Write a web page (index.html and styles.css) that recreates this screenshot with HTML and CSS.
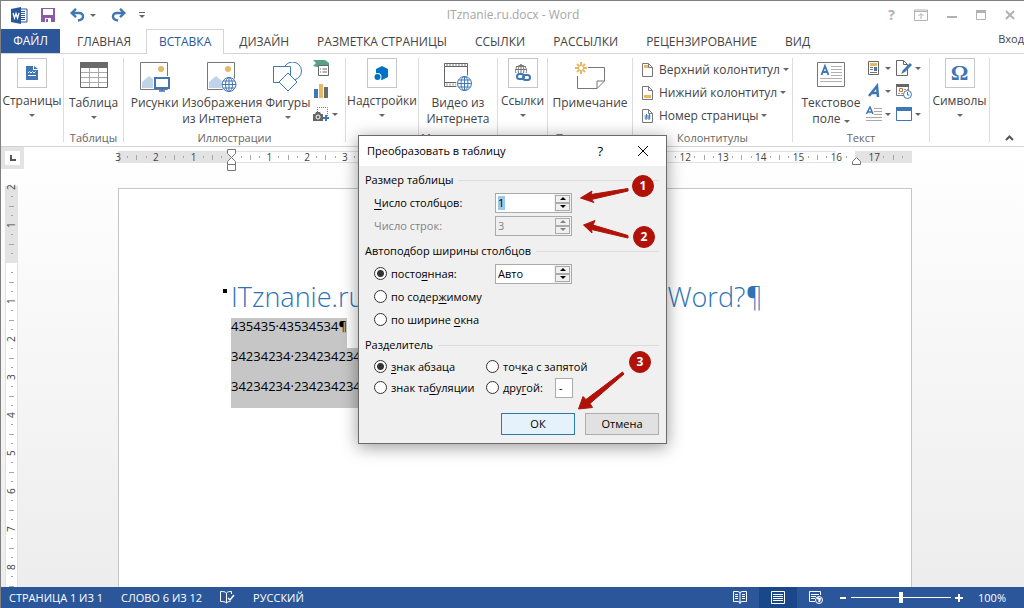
FILE: index.html
```html
<!DOCTYPE html>
<html lang="ru">
<head>
    <meta charset="UTF-8">
    <meta name="viewport" content="width=device-width, initial-scale=1.0">
    <title>ITznanie.ru.docx - Word</title>
    <link rel="stylesheet" href="styles.css">
</head>
<body>
    <header class="titlebar">
        <div class="quick-access">
            <svg class="logo" width="17" height="17" viewBox="0 0 17 17">
                <path d="M9 2h7v13H9z" fill="#fff" stroke="#2b579a"/>
                <path d="M10 4.500h4M10 6.500h4M10 8.500h4M10 10.500h4M10 12.500h4" stroke="#2b579a"/>
                <path d="M0 2l10-2v17L0 15z" fill="#2b579a"/>
                <path d="M2 6l1.500 5L5 6.500 6.500 11 8 6" fill="none" stroke="#fff" stroke-width="1.300"/>
            </svg>
            <button class="tool" aria-label="Сохранить">
                <svg width="14" height="14" viewBox="0 0 14 14">
                    <path d="M0 0h14v14H0z" fill="#8a5ca8"/>
                    <path d="M2 1h10v6H2zM4 10h6v4H4z" fill="#fff"/>
                    <path d="M5 11h2v3H5z" fill="#8a5ca8"/>
                </svg>
            </button>
            <button class="tool undo" aria-label="Отменить">
                <svg width="15" height="14" viewBox="0 0 15 14" fill="none" stroke="#3f76b4" stroke-width="2.400">
                    <path d="M2 5h7c2.500 0 4 1.500 4 3.500S11.500 12 8 12.500"/>
                    <path d="M6 .8L1.700 5 6 9.200"/>
                </svg>
                <i class="arrow"></i>
            </button>
            <button class="tool" aria-label="Повторить">
                <svg width="15" height="14" viewBox="0 0 15 14" fill="none" stroke="#3f76b4" stroke-width="2.400">
                    <path d="M13 5H6C3.500 5 2 6.500 2 8.500S3.500 12 7 12.500"/>
                    <path d="M9 .8L13.300 5 9 9.200"/>
                </svg>
            </button>
            <button class="tool" aria-label="Настройка панели">
                <svg width="6" height="6" viewBox="0 0 6 6"><path d="M0 .5h6" stroke="#666"/><path d="M0 3h6L3 6z" fill="#666"/></svg>
            </button>
        </div>
        <div class="doc-name">ITznanie.ru.docx - Word</div>
        <div class="window-buttons">
            <button class="tool help" aria-label="Справка">?</button>
            <button class="tool" aria-label="Лента">
                <svg width="14" height="12" viewBox="0 0 14 12"><path d="M.5 1h13v10.500H.5zM.5 2.500h13M7 10V5M4.500 7L7 4.500 9.500 7" fill="none" stroke="#b1b1b1"/></svg>
            </button>
            <button class="tool" aria-label="Свернуть">
                <svg width="10" height="10" viewBox="0 0 10 10"><path d="M0 7h10" stroke="#b1b1b1" stroke-width="2"/></svg>
            </button>
            <button class="tool" aria-label="Развернуть">
                <svg width="10" height="10" viewBox="0 0 10 10"><path d="M.5.5h9v9h-9z" fill="none" stroke="#b1b1b1"/><path d="M0 0h10v3H0z" fill="#b1b1b1"/></svg>
            </button>
            <button class="tool" aria-label="Закрыть">
                <svg width="10" height="10" viewBox="0 0 10 10"><path d="M1 1l8 8M9 1L1 9" stroke="#b1b1b1" stroke-width="2"/></svg>
            </button>
        </div>
    </header>

    <nav class="tabs">
        <button class="tab file">ФАЙЛ</button>
        <button class="tab">ГЛАВНАЯ</button>
        <button class="tab active">ВСТАВКА</button>
        <button class="tab">ДИЗАЙН</button>
        <button class="tab">РАЗМЕТКА СТРАНИЦЫ</button>
        <button class="tab">ССЫЛКИ</button>
        <button class="tab">РАССЫЛКИ</button>
        <button class="tab">РЕЦЕНЗИРОВАНИЕ</button>
        <button class="tab">ВИД</button>
        <a class="login" href="#">Вход</a>
    </nav>

    <section class="ribbon">
        <div class="group pages">
            <div class="items">
                <button class="big folded">
                    <span class="icon boxed">
                        <svg width="12" height="14" viewBox="0 0 12 14"><path d="M0 0h7v4h5v10H0z" fill="#3f76b4"/><path d="M8 0l4 3H8z" fill="#3f76b4"/><path d="M2 7l1.500-1.500L5 7l1.500-1.500L8 7l1.500-1.500M2 9.500h8" stroke="#fff" fill="none"/></svg>
                    </span>
                    <span>Страницы</span>
                    <i class="arrow"></i>
                </button>
            </div>
        </div>
        <div class="group tables">
            <div class="items">
                <button class="big">
                    <span class="icon">
                        <svg width="28" height="26" viewBox="0 0 28 26">
                            <path d="M.5.5h27v25H.5z" fill="#fff" stroke="#6a6a6a"/>
                            <path d="M1 10.500h26M1 15.500h26M1 20.500h26M9.500 5v20M18.500 5v20" stroke="#a8a8a8"/>
                            <path d="M0 0h28v6H0z" fill="#6a6a6a"/>
                        </svg>
                    </span>
                    <span>Таблица</span>
                    <i class="arrow"></i>
                </button>
            </div>
            <div class="caption">Таблицы</div>
        </div>
        <div class="group pictures">
            <div class="items">
                <button class="big">
                    <span class="icon">
                        <svg width="30" height="30" viewBox="0 0 30 30">
                            <path d="M.5.5h27v27H.5z" fill="#fff" stroke="#777"/>
                            <path d="M2 26v-6l7-6 6 5v7z" fill="#c0d3e8"/><circle cx="21" cy="7" r="3" fill="#e8b763"/>
                            <path d="M13 14h17v13H13z" fill="#fff"/><path d="M15 16h14v10H15z" fill="#fff" stroke="#3f76b4" stroke-width="2"/>
                            <path d="M22 26v3M19 29h6" stroke="#3f76b4" stroke-width="1.500"/>
                        </svg>
                    </span>
                    <span>Рисунки</span>
                </button>
                <button class="big online">
                    <span class="icon">
                        <svg width="30" height="30" viewBox="0 0 30 30">
                            <path d="M.5.5h27v27H.5z" fill="#fff" stroke="#777"/>
                            <path d="M2 26v-6l7-6 6 5v7z" fill="#c0d3e8"/><circle cx="21" cy="7" r="3" fill="#e8b763"/>
                            <circle cx="22" cy="22.500" r="8" fill="#fff"/>
                            <g fill="none" stroke="#3f76b4"><circle cx="22" cy="22.500" r="7"/><ellipse cx="22" cy="22.500" rx="3.500" ry="7"/><path d="M15 22.500h14M22 15.500v14M16 19h12M16 26h12"/></g>
                        </svg>
                    </span>
                    <span>Изображения<br>из Интернета</span>
                </button>
                <button class="big shapes">
                    <span class="icon">
                        <svg width="30" height="30" viewBox="0 0 30 30" fill="#fff" stroke="#3f76b4">
                            <circle cx="19.500" cy="9" r="9"/><path d="M.5 4.500h17v16H.5z"/><path d="M15 11l9 9-9 9-9-9z"/>
                        </svg>
                    </span>
                    <span>Фигуры</span>
                    <i class="arrow"></i>
                </button>
                <div class="small-column">
                    <button class="small" aria-label="SmartArt">
                        <svg width="16" height="16" viewBox="0 0 16 16"><path d="M0 0h12l4 3v4H4L0 6l3-3z" fill="#58a181"/><path d="M5.500 5.500h10v10h-10z" fill="#fff" stroke="#666"/><path d="M7 9h1M9.500 9H14M7 12h1M9.500 12H14" stroke="#666"/></svg>
                    </button>
                    <button class="small" aria-label="Диаграмма">
                        <svg width="16" height="16" viewBox="0 0 16 16"><path d="M1 6h4v9H1z" fill="#3f76b4"/><path d="M6 1h4v14H6z" fill="#e8b763"/><path d="M11 4h4v11h-4z" fill="#6a6a6a"/></svg>
                    </button>
                    <button class="small" aria-label="Снимок">
                        <svg width="16" height="16" viewBox="0 0 16 16"><path d="M4.500 6V1.500h10V10" fill="none" stroke="#777" stroke-dasharray="1 1"/><path d="M0 8h2l1-2h4l1 2h2v7H0z" fill="#666"/><circle cx="5" cy="11" r="2" fill="#666" stroke="#fff"/><path d="M13 9v6M10 12h6" stroke="#3f76b4" stroke-width="2"/></svg>
                        <i class="arrow"></i>
                    </button>
                </div>
            </div>
            <div class="caption">Иллюстрации</div>
        </div>
        <div class="group addins">
            <div class="items">
                <button class="big folded">
                    <span class="icon boxed">
                        <svg width="15" height="15" viewBox="0 0 15 15"><path d="M2 3l6-3 6 3v8l-6 3-6-3z" fill="#0072c6"/><circle cx="3.500" cy="11" r="4" fill="#fff"/><circle cx="3.500" cy="11" r="3" fill="#0072c6"/></svg>
                    </span>
                    <span>Надстройки</span>
                    <i class="arrow"></i>
                </button>
            </div>
        </div>
        <div class="group media">
            <div class="items">
                <button class="big">
                    <span class="icon">
                        <svg width="28" height="29" viewBox="0 0 28 29">
                            <path d="M.5 1.500h23v23H.5z" fill="#fff" stroke="#666"/>
                            <path d="M1 4.500h22M1 20.500h22" stroke="#666"/>
                            <path d="M2.500 3h21M2.500 22.500h21" stroke="#777" stroke-width="2" stroke-dasharray="1 2"/>
                            <circle cx="20.500" cy="21.500" r="8.500" fill="#fff"/>
                            <g fill="none" stroke="#3f76b4"><circle cx="20.500" cy="21.500" r="7"/><ellipse cx="20.500" cy="21.500" rx="3.500" ry="7"/><path d="M13.500 21.500h14M20.500 14.500v14M14.500 18h12M14.500 25h12"/></g>
                        </svg>
                    </span>
                    <span>Видео из<br>Интернета</span>
                </button>
            </div>
            <div class="caption">Мультимедиа</div>
        </div>
        <div class="group links">
            <div class="items">
                <button class="big folded">
                    <span class="icon boxed">
                        <svg width="16" height="18" viewBox="0 0 16 18" fill="none"><g stroke="#777"><path d="M1 9a5.500 5.500 0 1 1 10 0M.5 5.500h11M1 2.500h10M6 0v9M3.500 9c-1-4 0-7 2.500-8.500C8.500 2 9.500 5 8.500 9"/></g><g stroke="#3f76b4" stroke-width="2"><rect x="2" y="10" width="7" height="5" rx="2.500"/><rect x="8" y="11" width="7" height="5" rx="2.500"/></g></svg>
                    </span>
                    <span>Ссылки</span>
                    <i class="arrow"></i>
                </button>
            </div>
        </div>
        <div class="group comments">
            <div class="items">
                <button class="big">
                    <span class="icon">
                        <svg class="note" width="30" height="28" viewBox="0 0 30 28" fill="none"><path d="M13 5.500h16.500V19L22 26.500H2.500V14M22 26.500V19h7" stroke="#777"/><path d="M6 0v12M0 6h12M2 2l8 8M10 2l-8 8" stroke="#e8b763" stroke-width="2"/><circle cx="6" cy="6" r="2" fill="#fff"/></svg>
                    </span>
                    <span>Примечание</span>
                </button>
            </div>
            <div class="caption">Примечания</div>
        </div>
        <div class="group header-footer">
            <div class="list">
                <button class="row">
                    <svg width="11" height="14" viewBox="0 0 11 14"><path d="M.5.5h6l4 4v9H.5zM6.500.5v4h4" fill="#fff" stroke="#777"/><path d="M2 2h4v3H2z" fill="#e8b763"/></svg>
                    <span>Верхний колонтитул</span><i class="arrow"></i>
                </button>
                <button class="row">
                    <svg width="11" height="14" viewBox="0 0 11 14"><path d="M.5.5h6l4 4v9H.5zM6.500.5v4h4" fill="#fff" stroke="#777"/><path d="M2 9h7v3H2z" fill="#e8b763"/></svg>
                    <span>Нижний колонтитул</span><i class="arrow"></i>
                </button>
                <button class="row">
                    <svg width="11" height="14" viewBox="0 0 11 14"><path d="M.5.5h6l4 4v9H.5zM6.500.5v4h4" fill="#fff" stroke="#777"/><path d="M4.500 5L4 11M7.500 5L7 11M2.500 7h6M2.500 9h6" stroke="#3f76b4"/></svg>
                    <span>Номер страницы</span><i class="arrow"></i>
                </button>
            </div>
            <div class="caption">Колонтитулы</div>
        </div>
        <div class="group text">
            <div class="items">
                <button class="big textbox">
                    <span class="icon">
                        <svg width="28" height="25" viewBox="0 0 28 25"><path d="M.5.5h27v24H.5z" fill="#fff" stroke="#777"/><path d="M14 4.500h11M14 7.500h11M14 10.500h11M14 13.500h11M3 16.500h22M3 19.500h22" stroke="#b1b1b1"/><path d="M4.500 13L8 4l3.500 9M5.500 10h5" fill="none" stroke="#3f76b4" stroke-width="1.800"/></svg>
                    </span>
                    <span>Текстовое<br>поле <i class="arrow"></i></span>
                </button>
                <div class="small-column">
                    <button class="small" aria-label="Экспресс-блоки">
                        <svg width="16" height="16" viewBox="0 0 16 16"><path d="M2.500 1.500h10v13h-10z" fill="#fff" stroke="#666"/><path d="M4 3h7v3H4z" fill="#e8b763"/><path d="M4 7.500h3M4 9.500h3M4 12.500h7" stroke="#777"/><path d="M8 7h3v4H8z" fill="#3f76b4"/></svg>
                        <i class="arrow"></i>
                    </button>
                    <button class="small" aria-label="WordArt">
                        <svg width="16" height="16" viewBox="0 0 16 16"><path d="M3 13l8-10 1 11M6 10h5" fill="none" stroke="#3f76b4" stroke-width="2.500"/></svg>
                        <i class="arrow"></i>
                    </button>
                    <button class="small" aria-label="Буквица">
                        <svg width="16" height="16" viewBox="0 0 16 16"><path d="M8 2.500h8M8 5.500h8M8 8.500h8M0 11.500h16M0 14.500h16" stroke="#a8a8a8"/><path d="M.5 8L4 1l3 7M2 6h4" fill="none" stroke="#3f76b4" stroke-width="1.500"/></svg>
                        <i class="arrow"></i>
                    </button>
                </div>
                <div class="small-column">
                    <button class="small" aria-label="Строка подписи">
                        <svg width="16" height="16" viewBox="0 0 16 16"><path d="M.5.5h7l4 4v11H.5zM7.500.5v4h4" fill="#fff" stroke="#666"/><path d="M5 14l2-4 7-7 2 2-7 7z" fill="#3f76b4"/></svg>
                        <i class="arrow"></i>
                    </button>
                    <button class="small" aria-label="Дата и время">
                        <svg width="16" height="16" viewBox="0 0 16 16"><path d="M.5 1.500h12v11H.5z" fill="#fff" stroke="#777"/><path d="M0 1h13v3H0z" fill="#666"/><path d="M3.500 5.500h3v3h-3z" fill="none" stroke="#d8702a"/><path d="M8 6.500h4M2 10.500h5" stroke="#999" stroke-dasharray="2 1"/><circle cx="11.500" cy="11.500" r="4" fill="#fff" stroke="#3f76b4"/><path d="M11.500 9v3h2" fill="none" stroke="#3f76b4"/></svg>
                    </button>
                    <button class="small" aria-label="Объект">
                        <svg width="16" height="14" viewBox="0 0 16 14"><path d="M.5.5h15v13H.5z" fill="#fff" stroke="#3f76b4"/><path d="M0 0h16v4H0z" fill="#3f76b4"/></svg>
                        <i class="arrow"></i>
                    </button>
                </div>
            </div>
            <div class="caption">Текст</div>
        </div>
        <div class="group symbols">
            <div class="items">
                <button class="big folded">
                    <span class="icon boxed omega">Ω</span>
                    <span>Символы</span>
                    <i class="arrow"></i>
                </button>
            </div>
        </div>
        <button class="collapse" aria-label="Свернуть ленту">
            <svg width="9" height="6" viewBox="0 0 9 6"><path d="M1 5l3.500-3.500L8 5" fill="none" stroke="#555" stroke-width="2"/></svg>
        </button>
    </section>

    <main class="workspace">
        <div class="left-edge">
            <button class="tab-stop" aria-label="Табуляция">
                <svg width="6" height="6" viewBox="0 0 6 6"><path d="M1 0v5h5" fill="none" stroke="#555" stroke-width="2"/></svg>
            </button>
            <div class="ruler-v">
                <span class="margin"><b>2</b></span><span class="margin"><b>1</b></span><span></span><span><b>1</b></span><span><b>2</b></span><span><b>3</b></span><span><b>4</b></span><span><b>5</b></span><span><b>6</b></span><span><b>7</b></span><span><b>8</b></span>
            </div>
        </div>
        <div class="canvas">
            <div class="ruler-h">
                <span class="margin"><b>3</b></span><span class="margin"><b>2</b></span><span class="margin"><b>1</b></span>
                <span>
                    <svg class="indent" width="9" height="22" viewBox="0 0 9 22" fill="#fff" stroke="#777"><path d="M.5.5h8v4l-4 4-4-4zM.5 15.500v-3l4-4 4 4v3zM.5 15.500h8v6h-8z"/></svg>
                </span>
                <span><b>1</b></span><span><b>2</b></span><span><b>3</b></span><span></span><span></span><span></span><span></span><span></span><span></span><span></span><span></span><span><b>12</b></span><span><b>13</b></span><span><b>14</b></span><span><b>15</b></span>
                <span class="half"><b>16</b>
                    <svg class="indent-right" width="9" height="8" viewBox="0 0 9 8"><path d="M.5 7.500v-3l4-4 4 4v3z" fill="#fff" stroke="#777"/></svg>
                </span>
                <span class="margin"><b>17</b></span>
            </div>
            <article class="page">
                <h1><span>ITznanie.ru</span><span>Word?¶</span></h1>
                <p><mark>435435·43534534¶</mark></p>
                <p><mark>34234234·234234234¶</mark></p>
                <p><mark>34234234·234234234¶</mark></p>
            </article>
        </div>
    </main>

    <footer class="status">
        <span>СТРАНИЦА 1 ИЗ 1</span>
        <span>СЛОВО 6 ИЗ 12</span>
        <svg width="15" height="13" viewBox="0 0 15 13" fill="none" stroke="#fff"><path d="M6.500 12V2C5 .5 3 .5.5.5v10c2.500 0 4.500 0 6 1.500 1-1 2-1.500 4-1.500M6.500 2C8 .5 9 .5 11.500.5V3"/><path d="M8 7l2 2 4-5" stroke-width="1.500"/></svg>
        <span>РУССКИЙ</span>
        <div class="views">
            <button class="view" aria-label="Чтение"><svg width="14" height="13" viewBox="0 0 14 13" fill="none" stroke="#fff"><path d="M.5.5H5l2 1 2-1h4.500v10H9l-2 1-2-1H.5zM7 1v12M2 3.500h3M2 5.500h3M2 7.500h3M9 3.500h3M9 5.500h3M9 7.500h3"/></svg></button>
            <button class="view current" aria-label="Разметка"><svg width="14" height="13" viewBox="0 0 14 13" fill="none" stroke="#fff"><path d="M.5.5h13v12H.5zM2 3.500h10M2 5.500h10M2 7.500h10M2 9.500h10"/></svg></button>
            <button class="view" aria-label="Веб-документ"><svg width="14" height="13" viewBox="0 0 14 13" fill="none" stroke="#fff"><path d="M6 10.500H.5V.5h11V4M2 3.500h8M2 5.500h5M2 7.500h4"/><circle cx="10" cy="9" r="3.500"/><path d="M8 7l3 1-1 3" stroke-width="2"/></svg></button>
        </div>
        <div class="zoom">
            <button class="step" aria-label="Уменьшить"><svg width="8" height="8" viewBox="0 0 8 8"><path d="M1 4h6" stroke="#fff" stroke-width="2"/></svg></button>
            <input type="range" min="0" max="100" value="50" aria-label="Масштаб">
            <button class="step" aria-label="Увеличить"><svg width="8" height="8" viewBox="0 0 8 8"><path d="M0 4h8M4 0v8" stroke="#fff" stroke-width="2"/></svg></button>
        </div>
        <span class="percent">100%</span>
    </footer>

    <form class="dialog" role="dialog" aria-labelledby="dialogTitle">
        <div class="dialog-head">
            <span id="dialogTitle">Преобразовать в таблицу</span>
            <button type="button" class="tool question" aria-label="Справка">?</button>
            <button type="button" class="tool" aria-label="Закрыть"><svg width="12" height="12" viewBox="0 0 12 12"><path d="M1 1l10 10M11 1L1 11" stroke="#000"/></svg></button>
        </div>
        <div class="dialog-body">
            <div class="legend">Размер таблицы</div>
            <div class="field">
                <label for="cols"><u>Ч</u>исло столбцов:</label>
                <div class="spin">
                    <div class="value"><input type="text" id="cols" class="selected" value="1" size="1"></div>
                    <div class="steps"><button type="button" class="up" aria-label="Больше"></button><button type="button" class="down" aria-label="Меньше"></button></div>
                </div>
            </div>
            <div class="field disabled">
                <label for="rows">Число строк:</label>
                <div class="spin">
                    <div class="value"><input type="text" id="rows" value="3" disabled></div>
                    <div class="steps"><button type="button" class="up" disabled aria-label="Больше"></button><button type="button" class="down" disabled aria-label="Меньше"></button></div>
                </div>
            </div>
            <div class="legend second">Автоподбор ширины столбцов</div>
            <div class="field">
                <label><input type="radio" name="fit" checked>посто<u>я</u>нная:</label>
                <div class="spin">
                    <div class="value"><input type="text" value="Авто" aria-label="Ширина столбца"></div>
                    <div class="steps"><button type="button" class="up" aria-label="Больше"></button><button type="button" class="down" aria-label="Меньше"></button></div>
                </div>
            </div>
            <div class="field"><label><input type="radio" name="fit">по содер<u>ж</u>имому</label></div>
            <div class="field"><label><input type="radio" name="fit">по ширине <u>о</u>кна</label></div>
            <div class="legend second">Разделитель</div>
            <div class="separators">
                <label><input type="radio" name="sep" checked><span><u>з</u>нак абзаца</span></label>
                <label><input type="radio" name="sep"><span>точ<u>к</u>а с запятой</span></label>
                <label><input type="radio" name="sep"><span>знак та<u>б</u>уляции</span></label>
                <div class="other">
                    <label><input type="radio" name="sep"><span>дру<u>г</u>ой:</span></label>
                    <input type="text" class="char" value="-" aria-label="Другой разделитель">
                </div>
            </div>
            <div class="actions">
                <button type="submit" class="ok">ОК</button>
                <button type="button">Отмена</button>
            </div>
        </div>
        <svg class="hints" width="307" height="307" viewBox="0 0 307 307">
            <g fill="#b01208" stroke="#b01208" stroke-linejoin="round">
                <path d="M269 52.500L232 58.500 233 55 221.500 62 235 66.500 232.500 63.500 269 55z"/>
                <path d="M269 99.500L234 89 236 84.500 224.500 89 233 97 232.500 93.500 269 102z"/>
                <path d="M263.500 236L227 263.500 224 260.500 219.500 273 233.500 271.500 231 267.500 265 238z"/>
                <circle cx="284" cy="50" r="10.500"/><circle cx="285" cy="101" r="10.500"/><circle cx="281" cy="226" r="10.500"/>
            </g>
            <text x="284" y="54">1</text>
            <text x="285" y="105">2</text>
            <text x="281" y="230">3</text>
        </svg>
    </form>
</body>
</html>
```
FILE: styles.css
```css
* {
    box-sizing: border-box;
}

body {
    display: flex;
    flex-direction: column;
    height: 100vh;
    margin: 0;
    border-top: 1px solid #808080;
    border-left: 1px solid #808080;
    background: #fff;
    color: #444;
    font-family: "Open Sans", "Noto Sans", sans-serif;
    font-size: 12px;
    line-height: 16px;
    overflow: hidden;
}

button, input {
    margin: 0;
    padding: 0;
    border: none;
    background: none;
    color: inherit;
    font: inherit;
}

svg {
    display: block;
    flex: none;
}

.arrow {
    display: inline-block;
    flex: none;
    width: 0;
    border: 3px solid transparent;
    border-top-color: #666;
    border-bottom: none;
}

/* title bar */
.titlebar {
    display: grid;
    grid-template-columns: 1fr auto 1fr;
    align-items: center;
    height: 28px;
    padding: 0 9px 0 10px;
}

.quick-access, .window-buttons {
    display: flex;
    align-items: center;
    gap: 13px;
}

.tool {
    display: flex;
    align-items: center;
    gap: 5px;
}

.undo {
    margin: 0 2px;
}

.doc-name {
    color: #a6a6a6;
}

.window-buttons {
    justify-content: flex-end;
    gap: 19px;
}

.help {
    color: #b1b1b1;
    font-size: 14px;
    font-weight: 700;
}

/* tabs */
.tabs {
    display: flex;
    height: 25px;
    border-bottom: 1px solid #d4d4d4;
}

.tab {
    height: 24px;
    padding: 1px 14px 0;
    white-space: nowrap;
}

.file {
    width: 59px;
    padding: 0;
    margin-right: 3px;
    background: #2b579a;
    color: #fff;
}

.active {
    height: 25px;
    margin: 0 1px;
    padding: 0 12px;
    border: 1px solid #d4d4d4;
    border-bottom: none;
    background: #fff;
    color: #2b579a;
}

.login {
    margin-left: auto;
    padding-top: 2px;
    color: #444;
    font-size: 11px;
    text-decoration: none;
}

/* ribbon */
.ribbon {
    display: flex;
    flex: none;
    height: 93px;
    padding: 4px 0;
    border-bottom: 1px solid #d4d4d4;
}

.group {
    display: flex;
    flex: none;
    flex-direction: column;
    justify-content: space-between;
    border-right: 1px solid #dcdcdc;
}

.pages { width: 63px; }
.tables { width: 60px; }
.pictures { width: 222px; }
.addins { width: 73px; }
.media { width: 79px; }
.links { width: 50px; }
.comments { width: 85px; }
.header-footer { width: 160px; }
.text { width: 137px; }
.symbols { width: 60px; }

.items {
    display: flex;
    justify-content: center;
}

.caption {
    height: 10px;
    color: #666;
    font-size: 11px;
    line-height: 12px;
    text-align: center;
}

.big {
    display: flex;
    flex-direction: column;
    align-items: center;
    white-space: nowrap;
}

.icon {
    display: flex;
    align-items: flex-start;
    height: 33px;
    margin-bottom: 4px;
    padding-top: 4px;
}

.boxed {
    align-items: center;
    justify-content: center;
    width: 30px;
    height: 30px;
    margin-bottom: 5px;
    padding: 0;
    border: 1px solid #c6c6c6;
}

.big > .arrow {
    margin-top: 5px;
}

.omega {
    color: #3f76b4;
    font-family: "Liberation Serif", serif;
    font-size: 22px;
    font-weight: 700;
}

.pictures .items {
    gap: 3px;
}

.text .items {
    gap: 5px;
}

.small-column {
    display: flex;
    flex-direction: column;
    gap: 7px;
    padding-top: 2px;
}

.small {
    display: flex;
    align-items: center;
    gap: 3px;
    height: 16px;
}

.list {
    padding-left: 9px;
}

.row {
    display: flex;
    align-items: center;
    gap: 3px;
    height: 23px;
    white-space: nowrap;
}

.row svg {
    margin-right: 3px;
}

.collapse {
    align-self: flex-end;
    padding: 0 15px 1px;
}

/* document area */
.workspace {
    display: flex;
    flex: 1;
    min-height: 0;
    padding-right: 18px;
    background: linear-gradient(#fff, #ededed);
    overflow: hidden;
}

.left-edge {
    flex: none;
    width: 23px;
}

.tab-stop {
    display: grid;
    place-items: center;
    width: 23px;
    height: 22px;
    border: 4px solid #e3e3e3;
    background: #fff;
}

.ruler-v {
    width: 13px;
    margin: 17px 0 0 4px;
    border: 1px solid #e1e1e1;
    border-bottom: none;
    background: #fff;
    font-size: 10px;
    line-height: 11px;
}

.ruler-v span {
    display: flex;
    flex-direction: column;
    width: 11px;
    height: 38px;
    background:
        linear-gradient(#a6a6a6, #a6a6a6) center 9px / 2px 1px no-repeat,
        linear-gradient(#a6a6a6, #a6a6a6) center 19px / 5px 1px no-repeat,
        linear-gradient(#a6a6a6, #a6a6a6) center 28px / 2px 1px no-repeat;
}

.ruler-v b {
    height: 6px;
    margin-top: -3px;
    font-weight: 400;
    writing-mode: vertical-rl;
    transform: rotate(180deg);
}

.ruler-v .margin {
    background-color: #e3e3e3;
}

.canvas {
    display: flex;
    flex: 1;
    flex-direction: column;
    align-items: center;
    min-width: 0;
}

.ruler-h {
    display: grid;
    flex: none;
    grid-template-columns: repeat(21, 1fr);
    width: 794px;
    height: 12px;
    margin-top: 4px;
    font-size: 10px;
    line-height: 12px;
}

.ruler-h span {
    position: relative;
    display: flex;
    background:
        linear-gradient(#a6a6a6, #a6a6a6) 25% center / 1px 2px no-repeat,
        linear-gradient(#a6a6a6, #a6a6a6) 50% center / 1px 5px no-repeat,
        linear-gradient(#a6a6a6, #a6a6a6) 75% center / 1px 2px no-repeat,
        linear-gradient(#e1e1e1, #e1e1e1) top / 100% 1px no-repeat,
        linear-gradient(#e1e1e1, #e1e1e1) bottom / 100% 1px no-repeat #fff;
}

.ruler-h .margin {
    background-color: #e3e3e3;
}

.ruler-h .half {
    background:
        linear-gradient(#a6a6a6, #a6a6a6) 25% center / 1px 2px no-repeat,
        linear-gradient(90deg, #fff 50%, #e3e3e3 50%);
}

.ruler-h b {
    z-index: 1;
    display: flex;
    justify-content: center;
    width: 0;
    font-weight: 400;
}

.indent {
    position: absolute;
    top: -2px;
    left: -4px;
}

.indent-right {
    position: absolute;
    top: 6px;
    left: 16px;
}

.page {
    flex: 1;
    width: 794px;
    margin-top: 25px;
    padding: 91px 148px 0 112px;
    border: 1px solid #c6c6c6;
    border-bottom: none;
    background: #fff;
    color: #000;
    font-size: 13px;
}

h1 {
    position: relative;
    display: flex;
    justify-content: space-between;
    margin: 0 0 4px;
    color: #2e74b5;
    font-size: 27px;
    font-weight: 300;
    line-height: 34px;
}

h1::before {
    content: "";
    position: absolute;
    top: 9px;
    left: -8px;
    width: 4px;
    height: 4px;
    background: #000;
}

.page p {
    height: 30px;
    margin: 0;
}

mark {
    display: inline-block;
    height: 30px;
    background: #c6c6c6;
    line-height: 16px;
}

/* status bar */
.status {
    display: flex;
    flex: none;
    align-items: center;
    gap: 18px;
    height: 21px;
    padding: 0 18px 0 8px;
    background: #2b579a;
    color: #fff;
    font-size: 11px;
    white-space: nowrap;
}

.views {
    display: flex;
    height: 21px;
    margin-left: auto;
}

.view {
    display: grid;
    place-items: center;
    width: 38px;
}

.current {
    background: #19478a;
}

.zoom {
    display: flex;
    align-items: center;
    gap: 4px;
    margin-left: -14px;
}

input[type="range"] {
    appearance: none;
    width: 100px;
    height: 12px;
    background: linear-gradient(#fff, #fff) center / 100% 1px no-repeat;
}

input[type="range"]::-webkit-slider-thumb {
    appearance: none;
    width: 4px;
    height: 11px;
    background: #fff;
}

.percent {
    margin-left: -3px;
}

/* dialog */
.dialog {
    position: absolute;
    z-index: 10;
    top: 135px;
    left: calc(50% - 154px);
    width: 309px;
    border: 1px solid #6b6b6b;
    background: #f0f0f0;
    box-shadow: 0 3px 16px rgba(0, 0, 0, 0.4);
    color: #000;
    font-size: 11px;
}

.dialog-head {
    display: flex;
    align-items: center;
    height: 30px;
    padding: 0 17px 0 8px;
    background: #fff;
}

.question {
    margin: 0 34px 0 auto;
    font-size: 13px;
}

.dialog-body {
    padding: 6px 7px 8px 6px;
}

.legend {
    display: flex;
    align-items: center;
    gap: 5px;
    height: 16px;
    margin-bottom: 3px;
}

.legend::after {
    content: "";
    flex: 1;
    height: 1px;
    background: #dcdcdc;
}

.second {
    margin-top: 6px;
}

.field {
    display: flex;
    align-items: center;
    justify-content: space-between;
    height: 23px;
    padding: 0 87px 0 9px;
}

.disabled {
    color: #838383;
}

.dialog label {
    display: flex;
    align-items: center;
    white-space: pre;
}

u {
    text-underline-offset: 2px;
}

input[type="radio"] {
    flex: none;
    appearance: none;
    width: 13px;
    height: 13px;
    margin-right: 4px;
    border: 1px solid #333;
    border-radius: 50%;
    background: #fff;
}

input[type="radio"]:checked {
    background: radial-gradient(circle, #333 0 3px, #fff 4px);
}

.spin {
    display: flex;
    width: 77px;
    height: 20px;
    border: 1px solid #ababab;
    background: #fff;
}

.disabled .spin {
    background: #f0f0f0;
}

.value {
    display: flex;
    flex: 1;
    align-items: center;
    padding-left: 2px;
}

.value input {
    width: 54px;
    height: 14px;
}

.value .selected {
    width: 7px;
    background: #99c9ef;
}

.steps {
    display: flex;
    flex-direction: column;
    width: 17px;
    padding: 1px;
    background: #f0f0f0;
}

.steps button {
    display: grid;
    flex: 1;
    place-items: center;
    border: 1px solid #ababab;
}

.steps button::before {
    content: "";
    border: 3px solid transparent;
}

.steps .up::before {
    border-top: none;
    border-bottom-color: #000;
}

.steps .down::before {
    border-bottom: none;
    border-top-color: #000;
}

.disabled .up::before {
    border-bottom-color: #838383;
}

.disabled .down::before {
    border-top-color: #838383;
}

.separators {
    display: grid;
    grid-template-columns: 112px 1fr;
    grid-auto-rows: 21px;
    padding-left: 9px;
}

.other {
    display: flex;
    align-items: center;
    justify-content: space-between;
    padding-right: 86px;
}

.char {
    width: 18px;
    height: 20px;
    padding-left: 3px;
    border: 1px solid #ababab;
    background: #fff;
}

.actions {
    display: flex;
    justify-content: flex-end;
    gap: 10px;
    margin-top: 15px;
}

.actions button {
    width: 74px;
    height: 22px;
    border: 1px solid #adadad;
    background: #e1e1e1;
}

.actions .ok {
    border-color: #2a7ab0;
    background: #e5f1fb;
}

.hints {
    position: absolute;
    top: 0;
    left: 0;
    pointer-events: none;
}

.hints text {
    fill: #fff;
    font-size: 12px;
    font-weight: 700;
    text-anchor: middle;
}
```
